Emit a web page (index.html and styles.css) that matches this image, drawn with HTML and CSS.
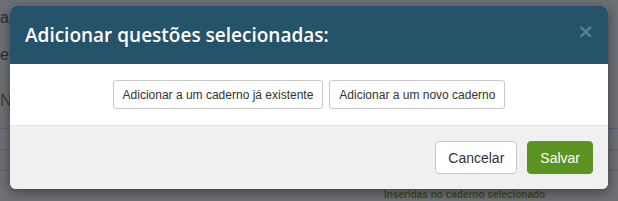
FILE: index.html
```html
<!DOCTYPE html>
<html lang="pt-BR">
<head>
    <meta charset="UTF-8">
    <meta name="viewport" content="width=device-width, initial-scale=1.0">
    <title>Adicionar questões</title>
    <link rel="stylesheet" href="styles.css">
</head>
<body>
    <div class="page">
        <p class="line l1">a</p>
        <p class="line l2">e</p>
        <p class="line l3">N</p>
        <hr class="rule blue">
        <hr class="rule">
        <hr class="rule">
        <p class="footer-text">Inseridas no caderno selecionado</p>
    </div>

    <div class="modal">
        <div class="modal-header">
            <h2>Adicionar questões selecionadas:</h2>
            <span class="close">&times;</span>
        </div>
        <div class="modal-body">
            <button class="btn">Adicionar a um caderno já existente</button>
            <button class="btn">Adicionar a um novo caderno</button>
        </div>
        <div class="modal-footer">
            <button class="btn btn-lg">Cancelar</button>
            <button class="btn btn-lg btn-success">Salvar</button>
        </div>
    </div>
</body>
</html>
```

FILE: styles.css
```css
body {
    margin: 0;
    font-family: "Liberation Sans", Arial, sans-serif;
    background: #6f7075;
    height: 201px;
    overflow: hidden;
    position: relative;
}
.page {
    padding-top: 8px;
}
.line {
    margin: 0;
    font-size: 16px;
    color: #2a2b2e;
    line-height: 20px;
}
.l1 { margin-bottom: 17px; }
.l2 { margin-bottom: 26px; }
.l3 { color: #4a3c24; font-size: 17px; }
.rule {
    border: 0;
    border-top: 1px solid #5e6065;
    margin: 20px 0 0;
}
.rule.blue {
    border-top-color: #55607a;
    margin-top: 17px;
}
.footer-text {
    margin: 19px 0 0;
    padding-left: 384px;
    font-size: 10px;
    line-height: 10px;
    font-weight: bold;
    color: #3e4a1e;
}
.modal {
    position: absolute;
    left: 10px;
    top: 6px;
    width: 598px;
    border-radius: 6px;
    overflow: hidden;
    background: #fff;
    box-shadow: 0 3px 12px rgba(0, 0, 0, 0.45);
}
.modal-header {
    background: #24536a;
    height: 58px;
    display: flex;
    align-items: center;
    justify-content: space-between;
    padding: 0 14px 0 15px;
}
.modal-header h2 {
    margin: 0;
    color: #fff;
    font-family: "Open Sans", sans-serif;
    font-weight: 600;
    font-size: 19px;
}
.close {
    color: #5c7f92;
    font-family: "DejaVu Sans", sans-serif;
    font-size: 20px;
    font-weight: bold;
    line-height: 1;
    margin-top: -8px;
}
.modal-body {
    padding: 16px 15px;
    display: flex;
    justify-content: center;
    gap: 6px;
}
.btn {
    font-family: "Liberation Sans", Arial, sans-serif;
    font-size: 12px;
    color: #333;
    background: #fff;
    border: 1px solid #c8c8c8;
    border-radius: 3px;
    height: 29px;
    padding: 0 9px;
}
.modal-footer {
    background: #f0f0f0;
    border-top: 1px solid #e3e3e3;
    padding: 15px;
    display: flex;
    justify-content: flex-end;
    gap: 10px;
}
.btn-lg {
    font-size: 14px;
    height: 33px;
    padding: 0 12px;
    border-radius: 4px;
}
.btn-success {
    background: #5a9322;
    border-color: #5a9322;
    color: #fff;
}
```
